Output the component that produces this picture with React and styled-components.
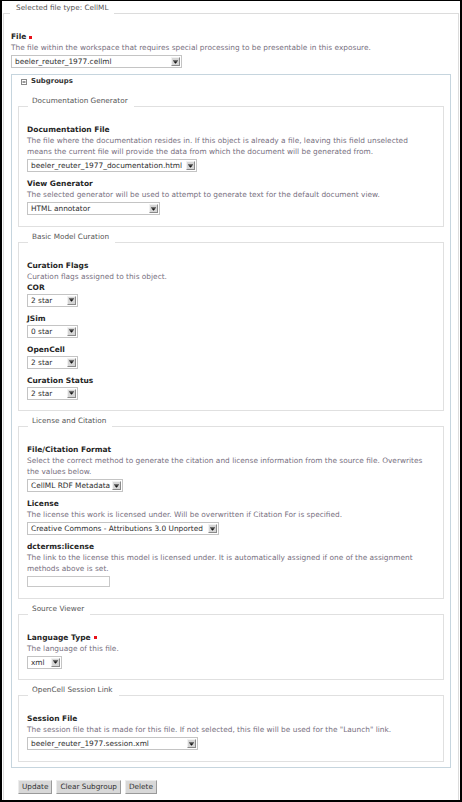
import React from "react";
import styled, { createGlobalStyle } from "styled-components";

const GlobalStyle = createGlobalStyle`
  html, body { margin: 0; padding: 0; background: #fff; }
  body { font-family: "DejaVu Sans", Verdana, sans-serif; }
`;

const Frame = styled.div`
  width: 462px;
  height: 802px;
  box-sizing: border-box;
  border: 2px solid #000;
  border-top-width: 1px;
  padding: 2px 1px 0;
  overflow: hidden;
  background: #fff;
`;

const Fieldset = styled.fieldset`
  margin: 0 0 ${(p) => (p.$outer ? 0 : 5)}px;
  padding: 7px ${(p) => (p.$outer ? 7 : 8)}px ${(p) => (p.$outer ? 40 : 10.5)}px;
  border: 1px solid ${(p) => (p.$outer ? "#dcdcdc" : "#e0e0e0")};
  min-width: 0;
  &:last-child { margin-bottom: 0; }
`;

const Legend = styled.legend`
  font-size: 7.3px;
  line-height: 9px;
  color: #555;
  padding: 0 6px 12px ${(p) => p.$padLeft}px;
  margin-left: ${(p) => p.$shift}px;
`;

const Field = styled.div`
  margin-bottom: ${(p) => (p.$flush ? 0 : 6)}px;
  &:last-child { margin-bottom: 0; }
`;

const Label = styled.div`
  font-size: 7.5px;
  line-height: 11px;
  font-weight: bold;
  color: #262626;
  white-space: nowrap;
`;

const Required = styled.span`
  display: inline-block;
  width: 3px;
  height: 3px;
  margin-left: 3px;
  background: #e8111a;
  vertical-align: 0.5px;
`;

const Help = styled.div`
  font-size: 7.4px;
  line-height: 11px;
  color: #776f80;
  white-space: nowrap;
`;

const SelectBox = styled.div`
  display: flex;
  align-items: center;
  box-sizing: border-box;
  width: ${(p) => p.$width}px;
  height: 13px;
  margin-top: ${(p) => (p.$gap ? 2 : 1)}px;
  padding: 0 1px 0 3px;
  border: 1px solid #c4c4c4;
  background: #fff;
`;

const SelectValue = styled.span`
  flex: 1;
  font-size: 7.4px;
  line-height: 11px;
  color: #2e2e2e;
  white-space: nowrap;
  overflow: hidden;
`;

const SelectArrow = styled.span`
  display: flex;
  align-items: center;
  justify-content: center;
  box-sizing: border-box;
  width: 9px;
  height: 9px;
  background: #d6d6d6;
  border: 1px solid;
  border-color: #f2f2f2 #8a8a8a #8a8a8a #f2f2f2;
`;

const TextInput = styled.input`
  display: block;
  box-sizing: border-box;
  width: 83px;
  height: 11px;
  margin: 2px 0 0;
  padding: 0 2px;
  border: 1px solid #c8c8c8;
  font-family: inherit;
  font-size: 7.2px;
  background: #fff;
`;

const SubgroupsBox = styled.div`
  margin-top: 6px;
  padding: 2px 6px 5px;
  border: 1px solid #c6d5de;
`;

const SubgroupsHeader = styled.div`
  display: flex;
  align-items: center;
  gap: 4px;
  height: 9px;
  padding-left: 3px;
  margin-bottom: 10px;
`;

const SubgroupsTitle = styled.span`
  font-size: 6.9px;
  font-weight: bold;
  color: #333;
  line-height: 9px;
`;

const ButtonRow = styled.div`
  display: flex;
  gap: 4px;
  margin-top: 12px;
  padding-left: 7px;
`;

const Button = styled.button`
  height: 14px;
  padding: 0 3px;
  font-family: inherit;
  font-size: 7.3px;
  line-height: 12px;
  color: #333;
  background: #d8d8d8;
  border: 1px solid;
  border-color: #ececec #9a9a9a #9a9a9a #ececec;
`;

function Select({ value, width, gap }) {
  return (
    <SelectBox $width={width} $gap={gap} role="combobox">
      <SelectValue>{value}</SelectValue>
      <SelectArrow>
        <svg width="5" height="4" viewBox="0 0 5 4">
          <rect x="0" y="0" width="5" height="0.7" fill="#444" />
          <polygon points="0.3,1.3 4.7,1.3 2.5,3.8" fill="#111" />
        </svg>
      </SelectArrow>
    </SelectBox>
  );
}

function HelpLines({ lines }) {
  return (
    <Help>
      {lines.map((l, i) => (
        <React.Fragment key={i}>
          {i > 0 && <br />}
          {l}
        </React.Fragment>
      ))}
    </Help>
  );
}

function SelectField({ label, required, help, value, width }) {
  return (
    <Field>
      <Label>
        {label}
        {required && <Required />}
      </Label>
      {help && <HelpLines lines={help} />}
      <Select value={value} width={width} gap={!!help} />
    </Field>
  );
}

const sections = [
  {
    legend: "Documentation Generator",
    fields: [
      {
        label: "Documentation File",
        help: [
          "The file where the documentation resides in. If this object is already a file, leaving this field unselected",
          "means the current file will provide the data from which the document will be generated from.",
        ],
        value: "beeler_reuter_1977_documentation.html",
        width: 170,
      },
      {
        label: "View Generator",
        help: ["The selected generator will be used to attempt to generate text for the default document view."],
        value: "HTML annotator",
        width: 133,
      },
    ],
  },
  {
    legend: "Basic Model Curation",
    group: {
      label: "Curation Flags",
      help: ["Curation flags assigned to this object."],
    },
    fields: [
      { label: "COR", value: "2 star", width: 51 },
      { label: "JSim", value: "0 star", width: 51 },
      { label: "OpenCell", value: "2 star", width: 51 },
      { label: "Curation Status", value: "2 star", width: 51 },
    ],
  },
  {
    legend: "License and Citation",
    fields: [
      {
        label: "File/Citation Format",
        help: [
          "Select the correct method to generate the citation and license information from the source file. Overwrites",
          "the values below.",
        ],
        value: "CellML RDF Metadata",
        width: 96,
      },
      {
        label: "License",
        help: ["The license this work is licensed under. Will be overwritten if Citation For is specified."],
        value: "Creative Commons - Attributions 3.0 Unported",
        width: 192,
      },
      {
        label: "dcterms:license",
        help: [
          "The link to the license this model is licensed under. It is automatically assigned if one of the assignment",
          "methods above is set.",
        ],
        input: true,
      },
    ],
  },
  {
    legend: "Source Viewer",
    fields: [
      {
        label: "Language Type",
        required: true,
        help: ["The language of this file."],
        value: "xml",
        width: 35,
      },
    ],
  },
  {
    legend: "OpenCell Session Link",
    fields: [
      {
        label: "Session File",
        help: ['The session file that is made for this file. If not selected, this file will be used for the "Launch" link.'],
        value: "beeler_reuter_1977.session.xml",
        width: 171,
      },
    ],
  },
];

export default function App() {
  return (
    <>
      <GlobalStyle />
      <Frame>
        <Fieldset $outer>
          <Legend $padLeft={6} $shift={-1}>Selected file type: CellML</Legend>
          <SelectField
            label="File"
            required
            help={["The file within the workspace that requires special processing to be presentable in this exposure."]}
            value="beeler_reuter_1977.cellml"
            width={171}
          />
          <SubgroupsBox>
            <SubgroupsHeader>
              <svg width="6" height="6" viewBox="0 0 6 6">
                <rect x="0.5" y="0.5" width="5" height="5" fill="#fff" stroke="#8a8a8a" strokeWidth="1" />
                <rect x="1.5" y="2.5" width="3" height="1" fill="#333" />
              </svg>
              <SubgroupsTitle>Subgroups</SubgroupsTitle>
            </SubgroupsHeader>
            {sections.map((s) => (
              <Fieldset key={s.legend}>
                <Legend $padLeft={4} $shift={1}>{s.legend}</Legend>
                {s.group && (
                  <Field $flush>
                    <Label>{s.group.label}</Label>
                    <HelpLines lines={s.group.help} />
                  </Field>
                )}
                {s.fields.map((f) =>
                  f.input ? (
                    <Field key={f.label}>
                      <Label>{f.label}</Label>
                      <HelpLines lines={f.help} />
                      <TextInput type="text" aria-label={f.label} />
                    </Field>
                  ) : (
                    <SelectField key={f.label} {...f} />
                  )
                )}
              </Fieldset>
            ))}
          </SubgroupsBox>
          <ButtonRow>
            <Button>Update</Button>
            <Button>Clear Subgroup</Button>
            <Button>Delete</Button>
          </ButtonRow>
        </Fieldset>
      </Frame>
    </>
  );
}
